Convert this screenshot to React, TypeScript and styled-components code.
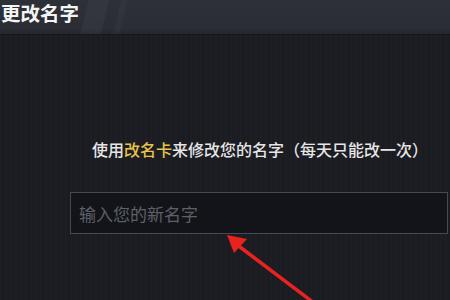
import * as React from 'react'
import styled, { createGlobalStyle } from 'styled-components'

const GlobalStyle = createGlobalStyle`
  html, body {
    margin: 0;
    padding: 0;
    background: #1a1c22;
  }
  * {
    box-sizing: border-box;
  }
`

const Screen = styled.div`
  position: relative;
  width: 450px;
  height: 300px;
  overflow: hidden;
  display: flex;
  flex-direction: column;
  font-family: 'Noto Sans CJK SC', 'Noto Sans', sans-serif;
  background:
    repeating-linear-gradient(90deg, rgba(255,255,255,0.012) 0 2px, transparent 2px 5px),
    #1a1c22;
`

const Header = styled.div`
  height: 35px;
  flex: none;
  display: flex;
  align-items: flex-start;
  padding-left: 1px;
  background:
    linear-gradient(104deg, transparent 0 86px, rgba(160,190,190,0.05) 86px 106px, transparent 106px 118px, rgba(255,255,255,0.025) 118px 124px, transparent 124px),
    linear-gradient(180deg, #2d3037 0%, #2a2d34 85%, #24262c 100%);
  border-bottom: 1px solid #16171b;
`

const Title = styled.h1`
  margin: 0;
  font-size: 19.5px;
  font-weight: 700;
  line-height: 26px;
  color: #f4f4f4;
`

const Body = styled.div`
  flex: 1;
  display: flex;
  flex-direction: column;
  padding: 102px 3px 0 70px;
`

const Hint = styled.p`
  margin: 0 0 0 22px;
  font-size: 16px;
  font-weight: 500;
  line-height: 24px;
  color: #e6e6e6;
  white-space: nowrap;
`

const Highlight = styled.span`
  color: #e8c44a;
`

const NameInput = styled.input`
  margin-top: 31px;
  width: 378px;
  height: 42px;
  padding: 0 8px;
  background: #13141a;
  border: 1px solid #474a52;
  outline: none;
  font-family: inherit;
  font-size: 17px;
  color: #dcdcdc;

  &::placeholder {
    color: #5d6068;
  }
`

const Arrow = styled.svg`
  position: absolute;
  left: 0;
  top: 0;
  pointer-events: none;
`

export default function App() {
  return (
    <>
      <GlobalStyle />
      <Screen>
        <Header>
          <Title>更改名字</Title>
        </Header>
        <Body>
          <Hint>
            使用<Highlight>改名卡</Highlight>来修改您的名字（每天只能改一次）
          </Hint>
          <NameInput placeholder="输入您的新名字" />
        </Body>
        <Arrow width="450" height="300" viewBox="0 0 450 300">
          <line x1="236" y1="244" x2="318" y2="306" stroke="#e8221e" strokeWidth="3.5" strokeLinecap="round" />
          <polygon points="227,235 247,239 234,253" fill="#e8221e" />
        </Arrow>
      </Screen>
    </>
  )
}
